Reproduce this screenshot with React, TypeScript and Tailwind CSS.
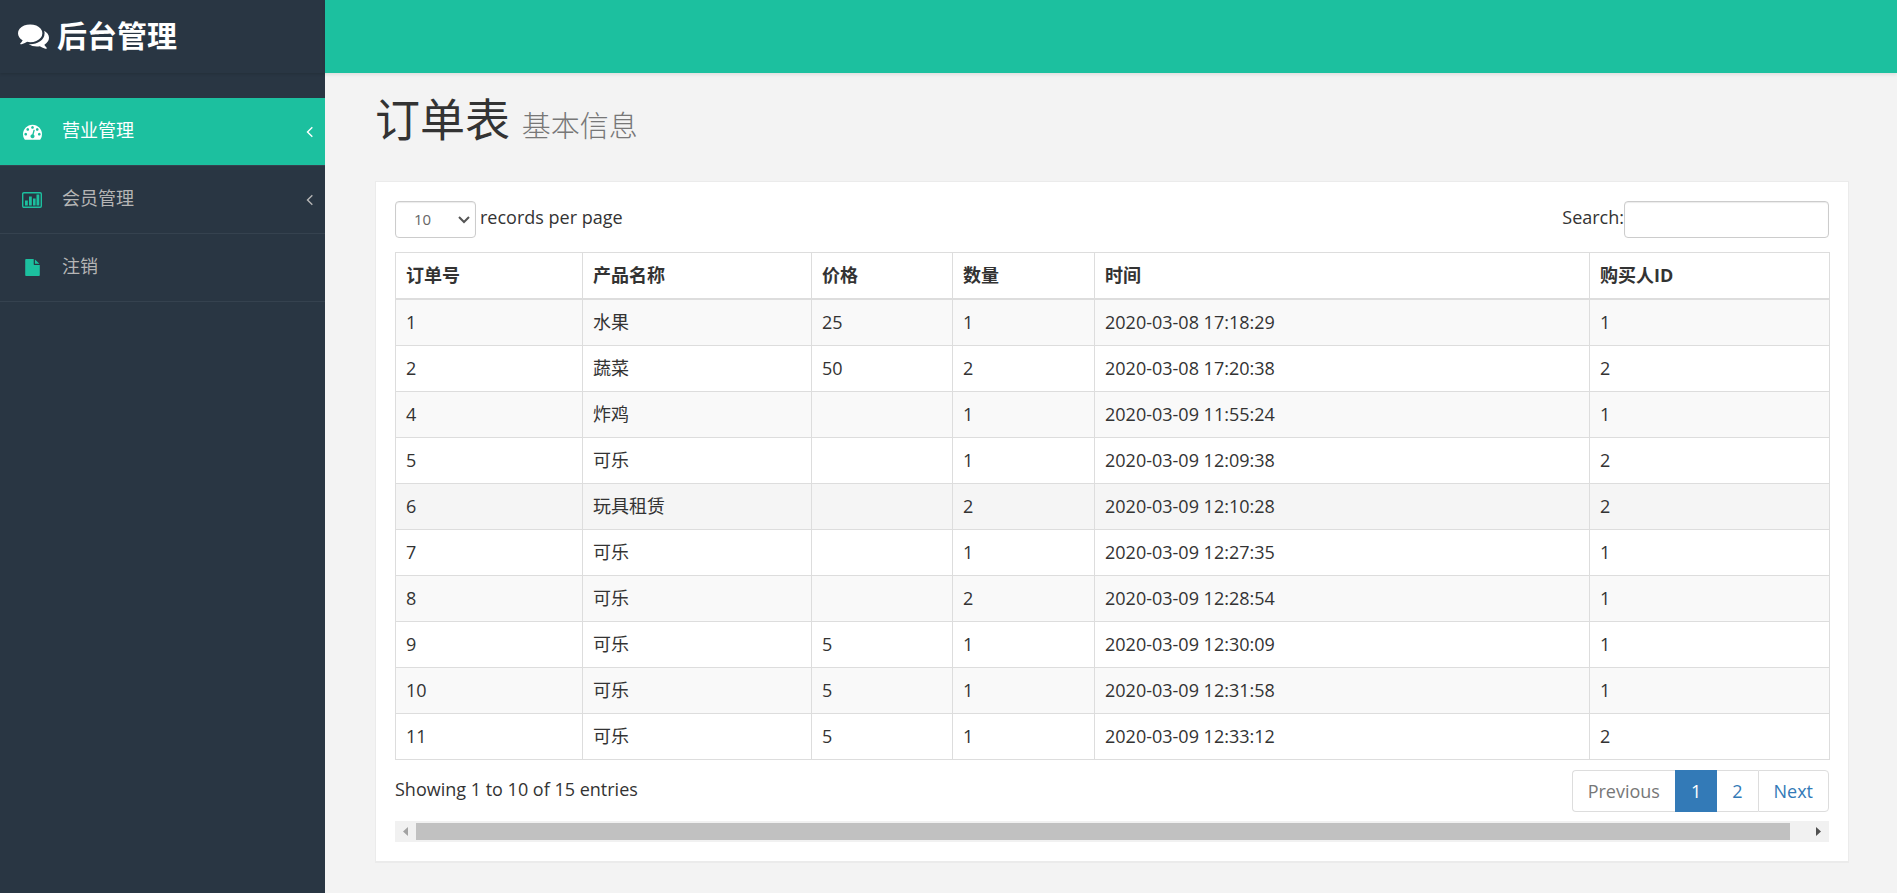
import React, { useState } from 'react';

interface Order {
  id: number;
  product: string;
  price: string;
  amount: number;
  time: string;
  buyer: number;
}

const orders: Order[] = [
  { id: 1, product: '水果', price: '25', amount: 1, time: '2020-03-08 17:18:29', buyer: 1 },
  { id: 2, product: '蔬菜', price: '50', amount: 2, time: '2020-03-08 17:20:38', buyer: 2 },
  { id: 4, product: '炸鸡', price: '', amount: 1, time: '2020-03-09 11:55:24', buyer: 1 },
  { id: 5, product: '可乐', price: '', amount: 1, time: '2020-03-09 12:09:38', buyer: 2 },
  { id: 6, product: '玩具租赁', price: '', amount: 2, time: '2020-03-09 12:10:28', buyer: 2 },
  { id: 7, product: '可乐', price: '', amount: 1, time: '2020-03-09 12:27:35', buyer: 1 },
  { id: 8, product: '可乐', price: '', amount: 2, time: '2020-03-09 12:28:54', buyer: 1 },
  { id: 9, product: '可乐', price: '5', amount: 1, time: '2020-03-09 12:30:09', buyer: 1 },
  { id: 10, product: '可乐', price: '5', amount: 1, time: '2020-03-09 12:31:58', buyer: 1 },
  { id: 11, product: '可乐', price: '5', amount: 1, time: '2020-03-09 12:33:12', buyer: 2 }
];

// widths act as proportions: the table always fills its panel
const columns = [
  { title: '订单号', width: 'w-[187px]' },
  { title: '产品名称', width: 'w-[229px]' },
  { title: '价格', width: 'w-[141px]' },
  { title: '数量', width: 'w-[142px]' },
  { title: '时间', width: 'w-[495px]' },
  { title: '购买人ID', width: 'w-[240px]' }
];

function CommentsIcon() {
  return (
    <svg viewBox="0 0 1792 1792" className="w-[31px] h-[31px]" fill="currentColor" aria-hidden="true">
      <path d="M1408 768q0 139-94 257t-256.5 186.5-353.5 68.5q-86 0-176-16-124 88-278 128-36 9-86 16h-3q-11 0-20.5-8t-11.5-21q-1-3-1-6.5t.5-6.5 2-6l2.5-5 3.5-5.5 4-5 4.5-5 4-4.5q5-6 23-25t26-29.5 22.5-29 25-38.5 20.5-44q-124-72-195-177t-71-224q0-139 94-257t256.5-186.5 353.5-68.5 353.5 68.5 256.5 186.5 94 257zm384 256q0 120-71 224.5t-195 176.5q10 24 20.5 44t25 38.5 22.5 29 26 29.5 23 25q1 1 4 4.5t4.5 5 4 5 3.5 5.5l2.5 5 2 6 .5 6.5-1 6.5q-3 14-13 22t-22 7q-50-7-86-16-154-40-278-128-90 16-176 16-271 0-472-132 58 4 88 4 161 0 309-45t264-129q125-92 192-212t67-254q0-77-23-152 129 71 204 178t75 230z" />
    </svg>
  );
}

function DashboardIcon() {
  return (
    <svg viewBox="0 0 1792 1792" className="w-[19px] h-[19px]" fill="currentColor" aria-hidden="true">
      <path d="M384 1152q0-53-37.5-90.5t-90.5-37.5-90.5 37.5-37.5 90.5 37.5 90.5 90.5 37.5 90.5-37.5 37.5-90.5zm192-448q0-53-37.5-90.5t-90.5-37.5-90.5 37.5-37.5 90.5 37.5 90.5 90.5 37.5 90.5-37.5 37.5-90.5zm428 481l101-382q6-26-7.5-48.5t-38.5-29.5-48 6.5-30 39.5l-101 382q-60 5-107 43.5t-63 98.5q-20 77 20 146t117 89 146-20 89-117q16-60-6-117t-72-91zm660-33q0-53-37.5-90.5t-90.5-37.5-90.5 37.5-37.5 90.5 37.5 90.5 90.5 37.5 90.5-37.5 37.5-90.5zm-640-640q0-53-37.5-90.5t-90.5-37.5-90.5 37.5-37.5 90.5 37.5 90.5 90.5 37.5 90.5-37.5 37.5-90.5zm448 192q0-53-37.5-90.5t-90.5-37.5-90.5 37.5-37.5 90.5 37.5 90.5 90.5 37.5 90.5-37.5 37.5-90.5zm320 448q0 261-141 483-19 29-54 29h-1402q-35 0-54-29-141-221-141-483 0-182 71-348t191-286 286-191 348-71 348 71 286 191 191 286 71 348z" />
    </svg>
  );
}

function ChartIcon() {
  return (
    <svg viewBox="0 0 20 16" className="w-5 h-4" fill="currentColor" aria-hidden="true">
      <rect x="0.7" y="0.7" width="18.6" height="14.6" rx="1.2" fill="none" stroke="currentColor" strokeWidth="1.4" />
      <rect x="3" y="8.5" width="2.8" height="5" />
      <rect x="7" y="4.5" width="2.8" height="9" />
      <rect x="11" y="6.5" width="2.6" height="7" />
      <rect x="14.5" y="2.5" width="2.8" height="11" />
    </svg>
  );
}

function FileIcon() {
  return (
    <svg viewBox="0 0 1792 1792" className="w-[17px] h-[17px]" fill="currentColor" aria-hidden="true">
      <path d="M1152 512v-472q22 14 36 28l408 408q14 14 28 36h-472zm-128 32q0 40 28 68t68 28h544v1056q0 40-28 68t-68 28h-1344q-40 0-68-28t-28-68v-1600q0-40 28-68t68-28h800v544z" />
    </svg>
  );
}

function AngleLeftIcon() {
  return (
    <svg viewBox="576 384 640 1152" className="w-[7px] h-3" fill="currentColor" aria-hidden="true">
      <path d="M1203 544q0 13-10 23l-393 393 393 393q10 10 10 23t-10 23l-50 50q-10 10-23 10t-23-10l-466-466q-10-10-10-23t10-23l466-466q10-10 23-10t23 10l50 50q10 10 10 23z" />
    </svg>
  );
}

const menu = [
  { label: '营业管理', icon: <DashboardIcon />, active: true, nested: true },
  { label: '会员管理', icon: <ChartIcon />, active: false, nested: true },
  { label: '注销', icon: <FileIcon />, active: false, nested: false }
];

function Sidebar() {
  return (
    <aside className="w-[325px] shrink-0 bg-[#293643]">
      <a href="#" className="flex items-center h-[73px] pb-0.5 pl-[18px] gap-2 text-white text-[30px] font-bold shadow-[0_1px_3px_rgba(0,0,0,0.15)]">
        <CommentsIcon />
        后台管理
      </a>
      <nav className="pt-[25px]">
        <ul>
          {menu.map(item => (
            <li key={item.label}>
              <a
                href="#"
                className={`flex items-center h-[68px] pl-5 pr-3 border-b border-[#35424f] ${
                  item.active ? 'bg-[#1cc09f] text-white' : 'text-[#b5b5b5]'
                }`}
              >
                <span className={`flex justify-center w-6 mr-[18px] ${item.active ? 'text-white' : 'text-[#1cc09f]'}`}>
                  {item.icon}
                </span>
                <span className="flex-1 pb-0.5">{item.label}</span>
                {item.nested && <AngleLeftIcon />}
              </a>
            </li>
          ))}
        </ul>
      </nav>
    </aside>
  );
}

function App() {
  const [pageSize, setPageSize] = useState('10');
  const [search, setSearch] = useState('');

  return (
    <div className="flex min-h-screen bg-[#f3f3f3] text-[#333] text-[18px] leading-[25px] font-['Open_Sans','Noto_Sans_CJK_SC',sans-serif]">
      <Sidebar />
      <div className="flex-1 min-w-0">
        <header className="h-[73px] bg-[#1cc09f] shadow-[0_2px_3px_rgba(0,0,0,0.08)]" />
        <main className="pl-[50px] pr-12 pb-[30px]">
          <h1 className="pt-[22px] mb-[30px] text-[45px] leading-[50px] font-normal">
            订单表 <small className="text-[29px] font-light text-[#777]">基本信息</small>
          </h1>

          <section className="p-[19px] bg-white border border-b-2 border-[#ebebeb]">
            <div className="flex justify-between mb-[14px]">
              <label className="flex gap-1">
                <span className="relative">
                  <select
                    value={pageSize}
                    onChange={e => setPageSize(e.target.value)}
                    className="block appearance-none w-[81px] h-[37px] pl-[18px] pb-px border border-[#ccc] rounded-sm bg-white text-[15px] text-[#666] shadow-[inset_0_1px_1px_rgba(0,0,0,0.08)]"
                  >
                    <option>10</option>
                    <option>25</option>
                    <option>50</option>
                    <option>100</option>
                  </select>
                  <svg viewBox="0 0 12 8" className="absolute right-1.5 top-[15px] w-3 h-2 pointer-events-none" fill="none" stroke="#555" strokeWidth="2" aria-hidden="true">
                    <path d="M1 1l5 5 5-5" />
                  </svg>
                </span>
                <span className="pt-1">records per page</span>
              </label>
              <label className="flex">
                <span className="pt-1">Search:</span>
                <input
                  type="search"
                  value={search}
                  onChange={e => setSearch(e.target.value)}
                  className="w-[205px] h-[37px] px-3 border border-[#ccc] rounded-sm bg-white text-[15px] shadow-[inset_0_1px_1px_rgba(0,0,0,0.08)]"
                />
              </label>
            </div>

            <table className="w-full table-fixed border-collapse border border-[#ddd]">
              <thead>
                <tr>
                  {columns.map(column => (
                    <th key={column.title} className={`${column.width} px-2.5 py-2.5 text-left font-bold border border-b-2 border-[#ddd]`}>
                      {column.title}
                    </th>
                  ))}
                </tr>
              </thead>
              <tbody>
                {orders.map(order => (
                  <tr key={order.id} className={order.id === 6 ? 'bg-[#f5f5f5]' : 'odd:bg-[#f9f9f9]'}>
                    <td className="px-2.5 py-2.5 border border-[#ddd]">{order.id}</td>
                    <td className="px-2.5 py-2.5 border border-[#ddd]">{order.product}</td>
                    <td className="px-2.5 py-2.5 border border-[#ddd]">{order.price}</td>
                    <td className="px-2.5 py-2.5 border border-[#ddd]">{order.amount}</td>
                    <td className="px-2.5 py-2.5 border border-[#ddd]">{order.time}</td>
                    <td className="px-2.5 py-2.5 border border-[#ddd]">{order.buyer}</td>
                  </tr>
                ))}
              </tbody>
            </table>

            <div className="flex justify-between mt-2.5 mb-[9px]">
              <p className="pt-[7px]">Showing 1 to 10 of 15 entries</p>
              <nav className="flex h-[42px] text-[#337ab7]">
                <a href="#" className="flex items-center px-[15px] border border-r-0 border-[#ddd] rounded-l text-[#777]">Previous</a>
                <a href="#" className="flex items-center px-4 bg-[#337ab7] text-white">1</a>
                <a href="#" className="flex items-center px-[15px] border-y border-[#ddd]">2</a>
                <a href="#" className="flex items-center px-[15px] border border-[#ddd] rounded-r">Next</a>
              </nav>
            </div>

            {/* horizontal scroll bar */}
            <div className="flex items-center h-[21px] bg-[#f1f1f1]">
              <svg viewBox="0 0 21 21" className="w-[21px] h-[21px]" fill="#a3a3a3" aria-hidden="true">
                <path d="M13 6v9l-5-4.5z" />
              </svg>
              <div className="flex-1 h-[17px] bg-[#c1c1c1]" />
              <svg viewBox="0 0 39 21" className="w-[39px] h-[21px]" fill="#505050" aria-hidden="true">
                <path d="M26 6v9l5-4.5z" />
              </svg>
            </div>
          </section>
        </main>
      </div>
    </div>
  );
}

export default App;
